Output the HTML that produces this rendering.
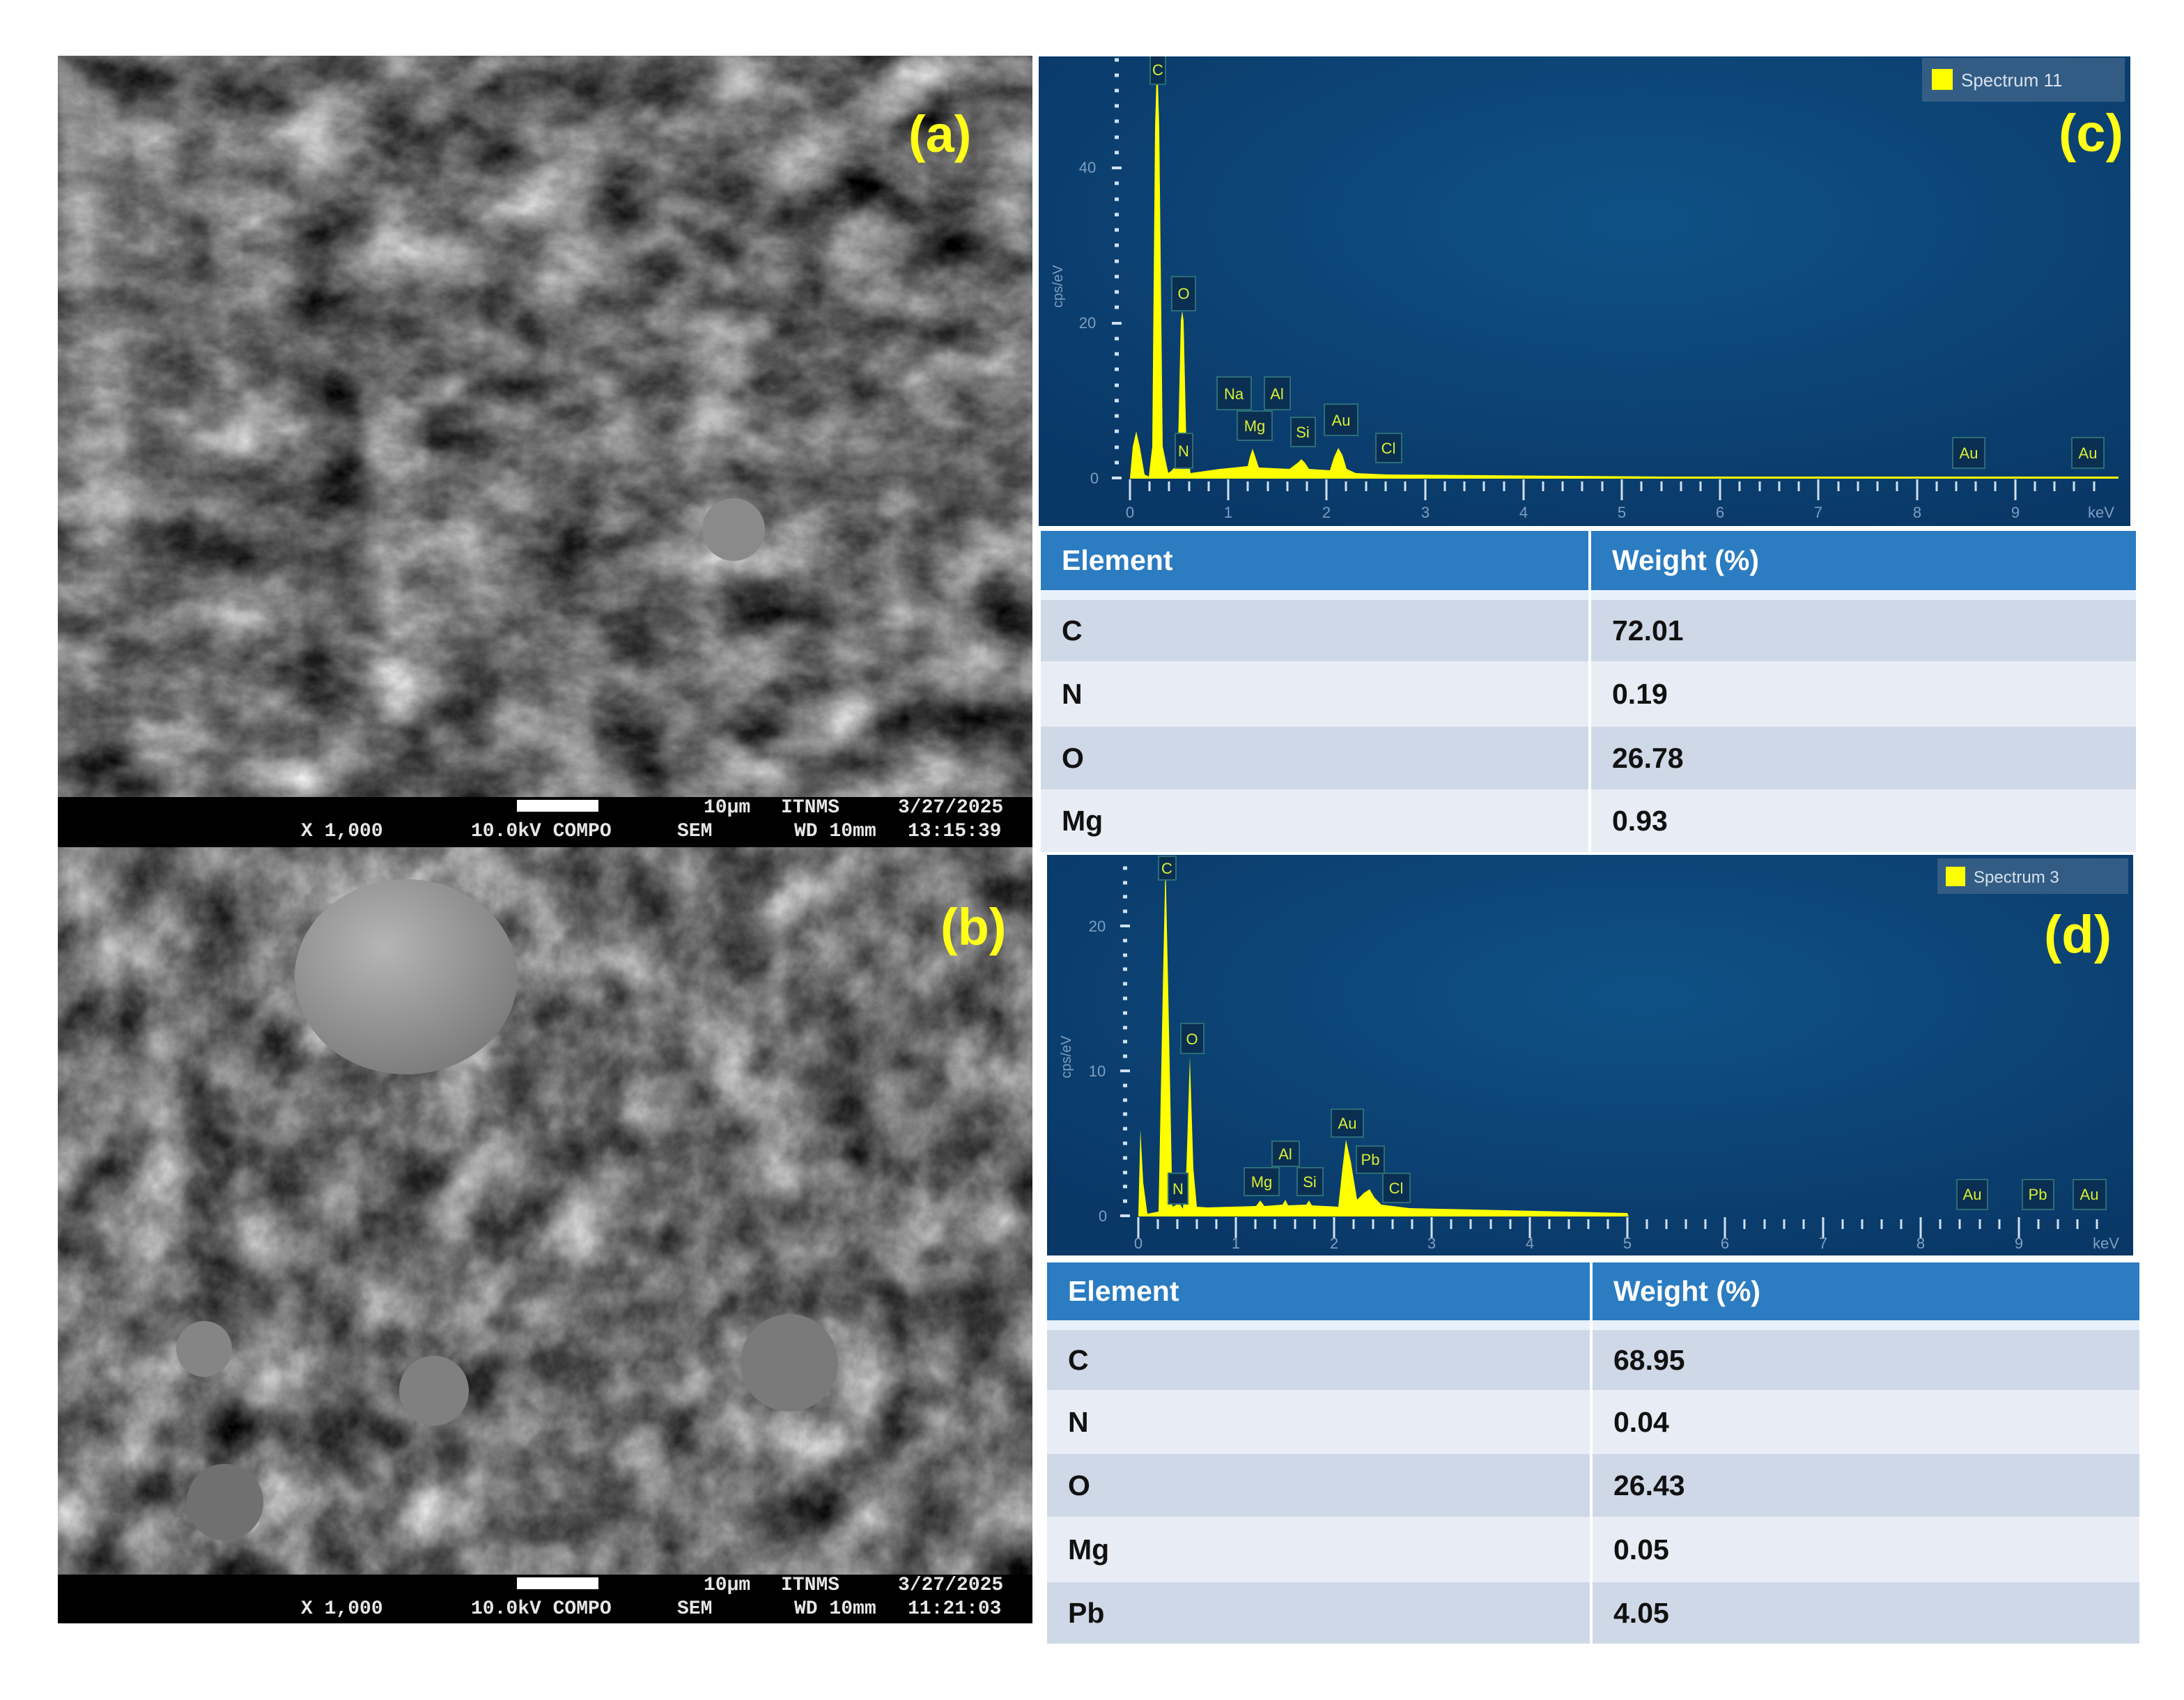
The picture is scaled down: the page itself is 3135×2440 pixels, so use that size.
<!DOCTYPE html>
<html><head><meta charset="utf-8"><style>
html,body{margin:0;padding:0;background:#fff;}
body{width:3135px;height:2440px;position:relative;overflow:hidden;font-family:"Liberation Sans",sans-serif;}
.abs{position:absolute;}
.sem{position:absolute;left:83px;width:1399px;background:#6f6f6f;overflow:hidden;}
.bar{position:absolute;left:83px;width:1399px;background:#000;color:#e6e6e6;font-family:"Liberation Mono",monospace;font-size:28px;font-weight:bold;}
.bar span{position:absolute;white-space:nowrap;}
.lbl{position:absolute;color:#ffff1a;font-weight:bold;font-size:74px;font-family:"Liberation Sans",sans-serif;}
table{position:absolute;border-collapse:collapse;font-family:"Liberation Sans",sans-serif;font-weight:bold;font-size:41px;color:#111;}
td{padding:0 0 0 30px;border-right:4px solid #fff;}
td:last-child{border-right:none;}
tr.h td{background:#2b7cc1;color:#fff;}
tr.gap td{background:#e8f1fa;padding:0;height:14px;}
tr.a td{background:#cfd8e6;}
tr.b td{background:#e8edf5;}
</style></head><body>

<!-- SEM (a) -->
<div class="sem" style="top:80px;height:1064px;">
<svg width="1399" height="1064">
<defs><filter id="t1" x="0" y="0" width="100%" height="100%" color-interpolation-filters="sRGB"><feTurbulence type="fractalNoise" baseFrequency="0.009 0.012" numOctaves="6" seed="3"/><feColorMatrix values="0.75 0.75 0 0 -0.33  0.75 0.75 0 0 -0.33  0.75 0.75 0 0 -0.33  0 0 0 0 1"/></filter></defs>
<rect width="1399" height="1064" filter="url(#t1)"/>
<ellipse cx="970" cy="680" rx="45" ry="45" fill="#8a8a8a"/>
</svg>
</div>
<div class="bar" style="top:1144px;height:72px;">
<div class="abs" style="left:659px;top:4px;width:117px;height:17px;background:#fff;"></div>
<span style="left:927px;top:0px;">10μm</span><span style="left:1038px;top:0px;">ITNMS</span><span style="left:1206px;top:0px;">3/27/2025</span>
<span style="left:349px;top:34px;">X 1,000</span><span style="left:593px;top:34px;">10.0kV COMPO</span><span style="left:889px;top:34px;">SEM</span><span style="left:1057px;top:34px;">WD 10mm</span><span style="left:1220px;top:34px;">13:15:39</span>
</div>
<div class="lbl" style="left:1304px;top:150px;">(a)</div>

<!-- SEM (b) -->
<div class="sem" style="top:1216px;height:1044px;">
<svg width="1399" height="1044">
<defs><filter id="t2" x="0" y="0" width="100%" height="100%" color-interpolation-filters="sRGB"><feTurbulence type="fractalNoise" baseFrequency="0.011 0.01" numOctaves="6" seed="11"/><feColorMatrix values="0.75 0.75 0 0 -0.32  0.75 0.75 0 0 -0.32  0.75 0.75 0 0 -0.32  0 0 0 0 1"/></filter>
<radialGradient id="sp" cx="0.4" cy="0.35" r="0.7"><stop offset="0" stop-color="#b5b5b5"/><stop offset="1" stop-color="#7a7a7a"/></radialGradient></defs>
<rect width="1399" height="1044" filter="url(#t2)"/>
<ellipse cx="500" cy="186" rx="160" ry="140" fill="url(#sp)"/>
<circle cx="1050" cy="740" r="70" fill="#7a7a7a"/>
<circle cx="540" cy="780" r="50" fill="#808080"/>
<circle cx="210" cy="720" r="40" fill="#858585"/>
<circle cx="240" cy="940" r="55" fill="#707070"/>
</svg>
</div>
<div class="bar" style="top:2260px;height:70px;">
<div class="abs" style="left:659px;top:4px;width:117px;height:17px;background:#fff;"></div>
<span style="left:927px;top:0px;">10μm</span><span style="left:1038px;top:0px;">ITNMS</span><span style="left:1206px;top:0px;">3/27/2025</span>
<span style="left:349px;top:34px;">X 1,000</span><span style="left:593px;top:34px;">10.0kV COMPO</span><span style="left:889px;top:34px;">SEM</span><span style="left:1057px;top:34px;">WD 10mm</span><span style="left:1220px;top:34px;">11:21:03</span>
</div>
<div class="lbl" style="left:1350px;top:1288px;">(b)</div>

<!-- Chart (c) -->
<svg class="abs" style="left:1491px;top:81px;" width="1567" height="674" font-family="Liberation Sans,sans-serif">
<defs><radialGradient id="bg" cx="0.55" cy="0.35" r="0.75"><stop offset="0" stop-color="#0f5185"/><stop offset="1" stop-color="#093766"/></radialGradient></defs>
<rect width="1567" height="674" fill="url(#bg)"/>
<g stroke="#cfe0f0" stroke-width="4">
<path d="M105,605h14M105,160h14M105,383h14"/>
<path d="M109,583h6M109,561h6M109,538h6M109,516h6M109,494h6M109,472h6M109,449h6M109,427h6M109,405h6M109,360h6M109,338h6M109,316h6M109,294h6M109,271h6M109,249h6M109,227h6M109,205h6M109,182h6M109,138h6M109,116h6M109,93h6M109,71h6M109,49h6M109,27h6M109,5h6" stroke-width="5"/>
</g>
<g stroke="#cfe0f0" stroke-width="3">
<path d="M131,607v30M272,607v30M413,607v30M555,607v30M696,607v30M837,607v30M978,607v30M1119,607v30M1261,607v30M1402,607v30"/>
<path d="M159,610v14M187,610v14M216,610v14M244,610v14M300,610v14M329,610v14M357,610v14M385,610v14M441,610v14M470,610v14M498,610v14M526,610v14M583,610v14M611,610v14M639,610v14M668,610v14M724,610v14M752,610v14M780,610v14M809,610v14M865,610v14M894,610v14M922,610v14M950,610v14M1006,610v14M1035,610v14M1063,610v14M1091,610v14M1148,610v14M1176,610v14M1204,610v14M1232,610v14M1289,610v14M1317,610v14M1345,610v14M1373,610v14M1430,610v14M1458,610v14M1486,610v14M1515,610v14"/>
</g>
<g fill="#7f9fc2" font-size="22" text-anchor="middle">
<text x="131" y="662">0</text><text x="272" y="662">1</text><text x="413" y="662">2</text><text x="555" y="662">3</text><text x="696" y="662">4</text><text x="837" y="662">5</text><text x="978" y="662">6</text><text x="1119" y="662">7</text><text x="1261" y="662">8</text><text x="1402" y="662">9</text><text x="1525" y="662">keV</text>
<text x="80" y="613">0</text><text x="70" y="390">20</text><text x="70" y="167">40</text>
<text transform="translate(34,330) rotate(-90)" font-size="20">cps/eV</text>
</g>
<path fill="#ffff00" d="M131,605 L135,560 L140,538 L145,560 L152,600 L158,603 L163,560 L167,100 L170,2 L173,100 L178,560 L186,598 L190,595 L195,590 L200,560 L204,380 L206,365 L208,380 L212,560 L218,598 L260,592 L300,588 L303,575 L307,563 L311,575 L316,590 L360,592 L372,583 L377,578 L382,583 L388,592 L418,594 L424,575 L430,562 L436,572 L442,592 L455,598 L500,600 L900,603 L1550,603 L1550,606 L131,606 Z"/>
<g fill="#0a2f52" stroke="#2c6d78" stroke-width="2">
<rect x="160" y="-2" width="22" height="42"/><rect x="191" y="316" width="34" height="49"/><rect x="196" y="541" width="25" height="50"/>
<rect x="256" y="460" width="49" height="47"/><rect x="324" y="460" width="37" height="47"/><rect x="285" y="509" width="50" height="42"/>
<rect x="362" y="518" width="35" height="42"/><rect x="410" y="499" width="48" height="45"/><rect x="484" y="541" width="37" height="42"/>
<rect x="1312" y="547" width="46" height="44"/><rect x="1483" y="547" width="46" height="44"/>
</g>
<g fill="#d9ef33" font-size="22" text-anchor="middle">
<text x="171" y="27">C</text><text x="208" y="348">O</text><text x="208" y="574">N</text><text x="280" y="492">Na</text><text x="342" y="492">Al</text>
<text x="310" y="538">Mg</text><text x="379" y="547">Si</text><text x="434" y="530">Au</text><text x="502" y="570">Cl</text>
<text x="1335" y="577">Au</text><text x="1506" y="577">Au</text>
</g>
<rect x="1268" y="2" width="291" height="63" fill="#3b6288" opacity="0.85"/>
<rect x="1282" y="18" width="30" height="30" fill="#ffff00"/>
<text x="1324" y="43" fill="#d6e2ee" font-size="26">Spectrum 11</text>
<text x="1464" y="136" fill="#ffff1a" font-size="76" font-weight="bold">(c)</text>
</svg>

<table style="left:1494px;top:762px;width:1572px;">
<tr class="h" style="height:85px;"><td style="width:756px;">Element</td><td>Weight (%)</td></tr>
<tr class="gap"><td></td><td></td></tr>
<tr class="a" style="height:88px;"><td>C</td><td>72.01</td></tr>
<tr class="b" style="height:94px;"><td>N</td><td>0.19</td></tr>
<tr class="a" style="height:90px;"><td>O</td><td>26.78</td></tr>
<tr class="b" style="height:90px;"><td>Mg</td><td>0.93</td></tr>
</table>

<!-- Chart (d) -->
<svg class="abs" style="left:1503px;top:1227px;" width="1559" height="575" font-family="Liberation Sans,sans-serif">
<rect width="1559" height="575" fill="url(#bg)"/>
<g stroke="#cfe0f0" stroke-width="4">
<path d="M105,518h14M105,310h14M105,102h14"/>
<path d="M109,497h6M109,476h6M109,456h6M109,435h6M109,414h6M109,393h6M109,372h6M109,352h6M109,331h6M109,289h6M109,268h6M109,248h6M109,227h6M109,206h6M109,185h6M109,164h6M109,144h6M109,123h6M109,81h6M109,60h6M109,40h6M109,19h6" stroke-width="5"/>
</g>
<g stroke="#cfe0f0" stroke-width="3">
<path d="M131,520v30M271,520v30M412,520v30M552,520v30M693,520v30M833,520v30M973,520v30M1114,520v30M1254,520v30M1395,520v30"/>
<path d="M159,523v14M187,523v14M215,523v14M243,523v14M299,523v14M327,523v14M356,523v14M384,523v14M440,523v14M468,523v14M496,523v14M524,523v14M580,523v14M608,523v14M637,523v14M665,523v14M721,523v14M749,523v14M777,523v14M805,523v14M861,523v14M889,523v14M917,523v14M945,523v14M1001,523v14M1030,523v14M1058,523v14M1086,523v14M1142,523v14M1170,523v14M1198,523v14M1226,523v14M1282,523v14M1310,523v14M1339,523v14M1367,523v14M1423,523v14M1451,523v14M1479,523v14M1507,523v14"/>
</g>
<g fill="#7f9fc2" font-size="22" text-anchor="middle">
<text x="131" y="565">0</text><text x="271" y="565">1</text><text x="412" y="565">2</text><text x="552" y="565">3</text><text x="693" y="565">4</text><text x="833" y="565">5</text><text x="973" y="565">6</text><text x="1114" y="565">7</text><text x="1254" y="565">8</text><text x="1395" y="565">9</text><text x="1520" y="565">keV</text>
<text x="80" y="526">0</text><text x="72" y="318">10</text><text x="72" y="110">20</text>
<text transform="translate(34,290) rotate(-90)" font-size="20">cps/eV</text>
</g>
<path fill="#ffff00" d="M131,518 L134,394 L138,470 L144,515 L160,512 L166,200 L170,7 L174,200 L180,505 L190,500 L195,508 L200,450 L205,290 L210,450 L215,505 L230,506 L300,504 L306,496 L312,504 L338,502 L342,495 L346,503 L372,502 L376,496 L380,503 L418,505 L424,450 L429,409 L436,440 L445,495 L455,485 L463,480 L470,492 L480,502 L520,507 L700,511 L833,514 L835,519 L131,519 Z"/>
<g fill="#0a2f52" stroke="#2c6d78" stroke-width="2">
<rect x="160" y="2" width="25" height="34"/><rect x="192" y="242" width="33" height="43"/><rect x="174" y="457" width="28" height="44"/>
<rect x="323" y="411" width="39" height="36"/><rect x="283" y="449" width="50" height="40"/><rect x="359" y="449" width="37" height="40"/>
<rect x="408" y="365" width="46" height="40"/><rect x="444" y="418" width="40" height="39"/><rect x="482" y="457" width="39" height="42"/>
<rect x="1306" y="466" width="44" height="43"/><rect x="1400" y="466" width="45" height="43"/><rect x="1473" y="466" width="47" height="43"/>
</g>
<g fill="#d9ef33" font-size="22" text-anchor="middle">
<text x="172" y="27">C</text><text x="208" y="272">O</text><text x="188" y="487">N</text><text x="342" y="437">Al</text>
<text x="308" y="477">Mg</text><text x="377" y="477">Si</text><text x="431" y="393">Au</text><text x="464" y="445">Pb</text><text x="501" y="486">Cl</text>
<text x="1328" y="495">Au</text><text x="1422" y="495">Pb</text><text x="1496" y="495">Au</text>
</g>
<rect x="1278" y="5" width="274" height="51" fill="#3b6288" opacity="0.85"/>
<rect x="1290" y="17" width="28" height="28" fill="#ffff00"/>
<text x="1330" y="40" fill="#d6e2ee" font-size="24">Spectrum 3</text>
<text x="1431" y="140" fill="#ffff1a" font-size="76" font-weight="bold">(d)</text>
</svg>

<table style="left:1503px;top:1812px;width:1568px;">
<tr class="h" style="height:83px;"><td style="width:749px;">Element</td><td>Weight (%)</td></tr>
<tr class="gap"><td></td><td></td></tr>
<tr class="a" style="height:86px;"><td>C</td><td>68.95</td></tr>
<tr class="b" style="height:92px;"><td>N</td><td>0.04</td></tr>
<tr class="a" style="height:90px;"><td>O</td><td>26.43</td></tr>
<tr class="b" style="height:94px;"><td>Mg</td><td>0.05</td></tr>
<tr class="a" style="height:88px;"><td>Pb</td><td>4.05</td></tr>
</table>

</body></html>
